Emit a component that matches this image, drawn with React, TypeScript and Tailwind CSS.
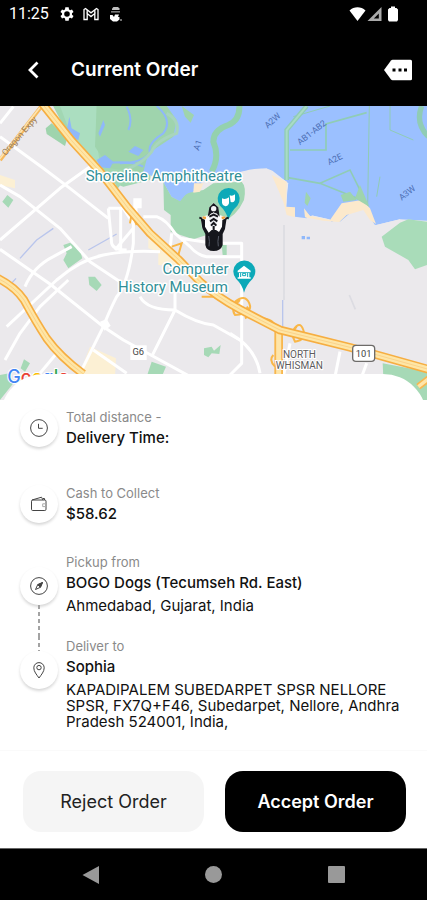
import type { ReactNode } from "react";

const sans = "font-['Inter','Liberation_Sans',sans-serif]";

function StatusBar() {
  return (
    <div className="flex h-8 items-center justify-between bg-black pr-[29px] pb-1 pl-[9px] text-white">
      <div className="flex items-center">
        <span className="w-[50px] font-['Roboto',sans-serif] text-base leading-5">11:25</span>
        <svg className="size-4" viewBox="0 0 24 24" fill="currentColor" aria-hidden="true">
          <path
            fillRule="evenodd"
            d="M19.4 13c.1-.3.1-.7.1-1s0-.7-.1-1l2.4-1.9-2.3-4-2.8 1.1a8 8 0 0 0-1.7-1L14.5 2h-5L9 5.2a8 8 0 0 0-1.7 1L4.500 5.1l-2.3 4L4.600 11a8 8 0 0 0 0 2l-2.400 1.900 2.300 4 2.800-1.100a8 8 0 0 0 1.700 1l.5 3.200h5l.5-3.200a8 8 0 0 0 1.700-1l2.800 1.100 2.300-4zM12 16.200a4.200 4.200 0 1 1 0-8.400 4.200 4.200 0 0 1 0 8.400z"
          />
        </svg>
        <svg className="ml-2 size-4" viewBox="0 0 16 16" fill="none" stroke="currentColor" strokeWidth="1.3" aria-hidden="true">
          <path d="M1 13.500V3.500L2.500 2.500 8 6.800l5.500-4.300L15 3.500v10h-3.200V7.600L8 10.600 4.200 7.600v5.900z" />
          <path d="M4.200 7.600V4M11.800 7.600V4" />
        </svg>
        <svg className="ml-2.5" width="13" height="16" viewBox="0 0 13 16" fill="currentColor" aria-hidden="true">
          <path d="M3 2.500 4.500 1H9l1.500 1.500V4H3z" opacity=".75" />
          <path d="M2 5.200h9v1.300H2z" opacity=".6" />
          <path d="M1 9h2.500l1.500 2 1-2.500h4L9 11h1.500v2.500L8 15.500H4L1 13z" />
          <circle cx="12" cy="14" r=".8" />
        </svg>
      </div>
      <div className="flex items-center">
        <svg width="17" height="16" viewBox="0 0 17 16" fill="currentColor" aria-hidden="true">
          <path d="M.5 4.500C5 .3 12 .3 16.500 4.500L8.500 15z" />
        </svg>
        <svg className="ml-px" width="15" height="16" viewBox="0 0 15 16" aria-hidden="true">
          <path d="M14.500 1v14H.5z" fill="#aaa" />
          <path d="M11.800 7.500v5H6.800z" fill="#000" />
        </svg>
        <svg className="ml-1.5" width="10" height="16" viewBox="0 0 10 16" fill="currentColor" aria-hidden="true">
          <path d="M3 .5h4v1.500h1.500L10 3.500V14l-1 1.500H1L0 14V3.500L1.500 2H3z" />
        </svg>
      </div>
    </div>
  );
}

function Header() {
  return (
    <header className="flex h-[74px] items-center bg-black pt-0.5 pr-[14px] pl-[26px] text-white">
      <button type="button" aria-label="Back" className="flex h-8 w-[45px] items-center">
        <svg width="14" height="18" viewBox="0 0 14 18" fill="none" stroke="currentColor" strokeWidth="2.8" aria-hidden="true">
          <path d="M11.500 1.500 4 9l7.500 7.500" />
        </svg>
      </button>
      <h1 className="flex-1 text-[19px] leading-6 font-semibold">Current Order</h1>
      <button type="button" aria-label="Messages">
        <svg width="30" height="22" viewBox="0 0 30 22" aria-hidden="true">
          <path d="M1 11 8 1.500Q8.600.7 9.600.7H27.500Q29 .7 29 2.200V20Q29 21.300 27.500 21.300H9.600Q8.600 21.300 8 20.500z" fill="#fff" />
          <path d="M9.500 9.500h3v3h-3zM15.500 9.500h3v3h-3zM21 9.500h3v3h-3z" fill="#000" />
        </svg>
      </button>
    </header>
  );
}

const highways = [
  "M118 0L215 122L300 215L385 325L450 400L535 478L600 545Q650 590 720 628Q790 665 840 690L1050 742L1300 812",
  "M-10 533Q45 560 72 600Q110 670 140 715Q180 770 250 822",
];

const streets = [
  "M0 110L130 205L210 265L325 355",
  "M40 20L0 70M0 255L60 290L180 385L270 485L360 545",
  "M0 448L150 552L310 680L370 720L480 780L580 835",
  "M0 420L180 265L270 200",
  "M20 680L170 540Q240 480 310 465T480 455",
  "M15 780L60 700L120 620L205 540",
  "M75 560Q100 500 160 470L215 440",
  "M325 325H370L400 370V430Q385 550 350 590Q325 640 310 680L240 820",
  "M325 325L335 430Q340 450 380 450M362 325V445",
  "M408 300V345M430 350H470Q500 360 525 400L570 440Q590 465 620 470H725V430H640L540 415",
  "M515 400L510 450M725 470V790L690 825",
  "M420 590Q440 630 525 630V560M525 630L455 770M525 630Q590 670 640 675L720 720Q770 760 780 820",
  "M345 450L400 385M170 760L120 820M280 750L380 820M720 720L690 700",
  "M870 730L850 830M1020 755L1005 830M1100 790L1085 830",
];

function DeliveryMap() {
  return (
    <svg
      className="block h-auto w-full"
      viewBox="0 18 1281 882"
      role="img"
      aria-label="Map of Mountain View with the courier's position"
    >
      <rect y="0" width="1281" height="900" fill="#ebe9ec" />

      <path d="M150 0L215 125L290 180L330 245L370 260L450 240L480 0z" fill="#a2d7b3" />
      <path d="M180 18H290V130L300 190L265 180L215 110z" fill="#abdec0" />
      <path d="M290 18H760V210L400 215L330 205L285 140z" fill="#9fd4ad" />
      <path d="M137 85L155 70L202 115L195 138L140 102z" fill="#9fd4ad" />
      <path
        d="M500 18H1281V362L1200 358L1125 376L1085 310L1020 365L930 345L860 330V245L800 205L725 215L610 245L580 275L540 302L515 290L490 245L430 215L445 160L520 110L530 60z"
        fill="#9bc0ff"
      />
      <path d="M290 180L315 165L340 185L330 205L300 202zM200 90L208 50L215 85L240 100L235 120L205 112zM385 155L405 138L430 150L415 168zM295 100L310 60L315 75L300 110z" fill="#8fb8fa" />
      <path d="M380 20Q400 60 385 90M470 18Q520 60 490 100Q440 130 450 160Q420 190 360 190M320 190Q390 180 430 200" fill="none" stroke="#8fb8fa" strokeWidth="6" />
      <path d="M500 40Q540 60 530 100Q470 120 455 155Q430 190 370 212" fill="none" stroke="#a8d5bd" strokeWidth="9" />
      <path d="M545 18L582 45L572 68L555 50z" fill="#9fd4ad" />
      <path d="M718 18Q720 60 685 75Q640 90 640 125Q660 170 635 215" fill="none" stroke="#94d1ae" strokeWidth="18" />
      <g fill="none" stroke="#90ccb5" strokeWidth="5">
        <path d="M860 232L960 250L1090 302M960 250L1050 210L1085 280M870 150H978V72L1100 38M978 72V150" />
        <path d="M1108 18L1103 320M1170 18V90L1240 120M1140 230L1130 290M880 50L990 18" strokeWidth="3" />
      </g>
      <path d="M920 18L860 90V240" fill="none" stroke="#90ccb5" strokeWidth="14" />
      <path d="M920 18L860 90V240" fill="none" stroke="#a9dbc5" strokeWidth="6" />
      <path d="M1265 18Q1245 70 1285 110" fill="none" stroke="#90ccb5" strokeWidth="16" />
      <path d="M725 215Q800 195 825 218L865 250L855 345H930L1020 365L1130 375L1200 358V450H740L640 400L580 280L610 245z" fill="#ebe9ec" />
      <path d="M865 252L860 322L885 322V350L920 355L915 320L930 350L945 340L960 350L972 335L995 365L1022 355L1028 300L985 270z" fill="#9bc0ff" />
      <path d="M815 225L860 245L858 320L885 322V352L860 345L850 305L835 270z" fill="#fce9cc" />
      <path d="M1025 310L1085 300L1110 325L1128 372L1110 360L1090 330L1040 345L1018 366L970 362L915 352L912 325L930 348L990 360z" fill="#fce9cc" />
      <path d="M918 275L932 295L922 318L914 308zM1022 285L1050 275L1070 300L1030 305zM1080 255L1108 320L1065 295z" fill="#9fd4ad" />
      <path d="M490 245L515 290L540 302L560 280L610 270L640 250L725 245Q740 260 732 300Q710 350 660 370L620 405L580 418L512 395V345L492 330z" fill="#a3d7b3" />
      <path d="M492 250H582V270L555 285L540 304L515 290z" fill="#9bc0ff" />
      <path d="M582 250H610L600 275L580 278z" fill="#fce9cc" />
      <path d="M1145 410L1200 368L1225 358L1281 365V495L1245 508L1225 480L1155 440z" fill="#a9dcb9" />
      <g fill="#a6d9b6">
        <path d="M190 435L210 428L240 450L247 475L205 505L190 480L200 460z" />
        <path d="M265 530H285L305 555L290 573L268 555z" />
        <path d="M22 285L40 300L25 323L7 305z" />
        <path d="M665 435H680V465H668z" />
        <path d="M612 745L635 740L642 752L662 735L658 762L635 760L625 772L612 765z" />
        <path d="M455 785L498 800L485 830H440z" />
        <path d="M72 778L90 790L75 815L62 805zM0 825L28 820L40 850L0 900z" />
        <path d="M1148 790L1281 815V900H1230L1150 830z" />
        <path d="M345 245L365 250L350 270z" />
      </g>
      <g fill="#fcf0d4">
        <path d="M270 740L348 775L345 830H235z" />
        <path d="M445 415L500 445L540 500L475 495V455L445 445z" />
        <path d="M0 225L45 240V265L0 255z" />
      </g>
      <path d="M60 475L110 420L160 385M265 450L350 402M30 555L48 535M848 600V680" fill="none" stroke="#b9c5ec" strokeWidth="4" />
      <path d="M852 375V600M1048 585L1066 628" fill="none" stroke="#dcdce2" strokeWidth="5" />
      <path d="M905 408h10v10h-10zM920 410h10v8h-10z" fill="#8fb8fa" />

      <g fill="none" stroke="#fff" strokeWidth="9" strokeLinejoin="round">
        {streets.map((d) => (
          <path key={d} d={d} />
        ))}
      </g>
      <path d="M400 295h25v30h-25zM300 665l20-8 12 20-18 15z" fill="#fff" />

      <g fill="none" stroke="#f9b748" strokeWidth="6">
        <path d="M390 370L395 340L410 375M515 440L545 430L535 465M605 590H640L660 600" />
        <path d="M705 605Q735 580 748 610T705 645Q690 625 720 600M740 620Q760 640 735 655" />
        <path d="M880 690Q900 660 910 690T885 725Q870 700 890 680" />
        <path d="M830 700Q830 660 790 655M820 765Q805 780 825 800" />
      </g>
      <path d="M125 18L0 180" fill="none" stroke="#f5b95e" strokeWidth="12" />
      <path d="M123 18L-2 178" fill="none" stroke="#fde5b1" strokeWidth="5" />
      <path d="M836 690V835" fill="none" stroke="#f8b74e" strokeWidth="26" />
      <path d="M836 690V835" fill="none" stroke="#fee5a9" strokeWidth="15" />
      <path d="M1255 860L1300 825" fill="none" stroke="#f8b74e" strokeWidth="20" />
      <path d="M1255 860L1300 825" fill="none" stroke="#fee5a9" strokeWidth="10" />
      <g fill="none" strokeLinejoin="round">
        {highways.map((d) => (
          <g key={d}>
            <path d={d} stroke="#f6ae42" strokeWidth="26" />
            <path d={d} stroke="#fee6a6" strokeWidth="16" />
            <path d={d} stroke="#fbd28a" strokeWidth="3" />
          </g>
        ))}
      </g>

      <g fontFamily="Roboto, sans-serif" fontSize="26" fill="#4d6fb5">
        <text transform="translate(596 153) rotate(-70)">A1</text>
        <text transform="translate(803 86) rotate(-42)">A2W</text>
        <text transform="translate(900 136) rotate(-38)">AB1-AB2</text>
        <text transform="translate(988 196) rotate(-27)">A2E</text>
        <text transform="translate(1205 302) rotate(-38)">A3W</text>
        <text transform="translate(17 168) rotate(-49)" fill="#9c7f5c">Oregon Expy</text>
      </g>

      <rect x="391" y="736" width="49" height="44" fill="#fff" />
      <text x="415" y="766" textAnchor="middle" fontFamily="Roboto, sans-serif" fontSize="28" fill="#444">
        G6
      </text>
      <rect x="1058" y="736" width="66" height="48" rx="10" fill="#fff" stroke="#6d6b69" strokeWidth="4" />
      <text x="1091" y="770" textAnchor="middle" fontFamily="Roboto, sans-serif" fontSize="28" fill="#444">
        101
      </text>
      <g
        fontFamily="Roboto, sans-serif"
        fontSize="30"
        fill="#5d5b5d"
        stroke="#fff"
        strokeWidth="6"
        paintOrder="stroke"
        textAnchor="middle"
      >
        <text x="898" y="773">NORTH</text>
        <text x="898" y="808">WHISMAN</text>
      </g>
      <g
        fontFamily="Roboto, sans-serif"
        fontSize="45"
        fill="#318f98"
        stroke="#fff"
        strokeWidth="9"
        strokeLinejoin="round"
        paintOrder="stroke"
      >
        <text x="257" y="242">Shoreline Amphitheatre</text>
        <text x="686" y="522" textAnchor="end">Computer</text>
        <text x="684" y="576" textAnchor="end">History Museum</text>
      </g>

      <path d="M685 360Q680 335 660 317A33 33 0 1 1 712 317Q692 335 685 360z" fill="#0ca9b8" />
      <path d="M666 295q10 5 21-3v18q-3 9-11 9-9-2-10-10zM689 286q9 4 16-3v17q-3 8-9 7l-4-1z" fill="#fff" />
      <path d="M732 578Q728 555 708 536A33 33 0 1 1 758 536Q738 555 732 578z" fill="#0ca9b8" />
      <path d="M713 512L732 497L752 512V517H713zM717 519H748V532H752V536H713V532H717z" fill="#fff" />
      <path d="M722 519V531M743 519V531M728 520H737V527H728z" stroke="#0ca9b8" strokeWidth="3" fill="none" />

      <g aria-hidden="true">
        <path d="M641 308L655 322L658 345L680 352L676 385L664 400V435Q660 453 641 453Q622 453 618 435V400L606 385L602 352L624 345L628 322z" fill="#fff" />
        <path d="M602 354L615 359L615 380L626 398L635 390H648L657 396L666 380L667 360L680 354L675 387L668 402V435Q662 453 641 453Q619 453 616 435V402L607 385z" fill="#15161c" />
        <path d="M628 322L641 309L655 322L659 350L649 340H634L623 350z" fill="#16181e" />
        <circle cx="641" cy="326" r="8" fill="#f3f4f6" />
        <path d="M627 350L641 336L655 350L650 376L641 392L632 376z" fill="#eceef2" />
        <path d="M628 350L641 344L654 350M630 364L641 357L652 364M633 377L641 369L649 377M641 378V392" fill="none" stroke="#15161c" strokeWidth="6" />
        <path d="M626 408Q630 425 627 439M656 408Q652 425 655 439" fill="none" stroke="#555a66" strokeWidth="3" />
        <path d="M598 353L607 356M676 356L686 353" stroke="#15161c" strokeWidth="6" />
        <path d="M608 352L618 354M665 354L675 352" stroke="#f0a343" strokeWidth="7" />
      </g>

      <g fontFamily="Inter, sans-serif" fontSize="54" fontWeight="500" stroke="#fff" strokeWidth="6" paintOrder="stroke">
        <text x="22" y="850">
          <tspan fill="#4285f4">G</tspan>
          <tspan fill="#ea4335">o</tspan>
          <tspan fill="#fbbc05">o</tspan>
          <tspan fill="#4285f4">g</tspan>
          <tspan fill="#34a853">l</tspan>
          <tspan fill="#ea4335">e</tspan>
        </text>
      </g>
    </svg>
  );
}

function Disc({ children }: { children: ReactNode }) {
  return (
    <div className="flex size-[38px] shrink-0 items-center justify-center rounded-full bg-white text-[#444] shadow-[0_2px_3px_rgba(0,0,0,0.16)]">
      <svg
        width="20"
        height="20"
        viewBox="0 0 20 20"
        fill="none"
        stroke="currentColor"
        strokeLinejoin="round"
        aria-hidden="true"
      >
        {children}
      </svg>
    </div>
  );
}

const dashes = "w-0.5 bg-[repeating-linear-gradient(to_bottom,#a3a3a3_0_4px,transparent_4px_7px)]";
const label = "text-[13px] leading-5 text-[#8a8a8a]";
const value = "text-[15px] leading-[22px] font-medium text-[#111]";

function OrderDetails() {
  return (
    <main className="relative -mt-[26px] flex-1 rounded-t-[44px] bg-white px-5 pt-[33px] pb-5">
      <section className="flex items-center gap-2">
        <Disc>
          <circle cx="10" cy="10" r="8.4" />
          <path d="M9.500 5.800v4.500h4.200" />
        </Disc>
        <div>
          <p className={label}>Total distance -</p>
          <p className={value}>Delivery Time:</p>
        </div>
      </section>

      <section className="mt-[34px] flex items-center gap-2">
        <Disc>
          <rect x="2.5" y="6" width="14.5" height="10.5" rx="1.2" />
          <path d="M3 6 12.500 3.200 14 6M14 4.500h1.500V6" />
          <path d="M17 9.800h-3.300v2.800H17" stroke="#aaa" />
        </Disc>
        <div>
          <p className={label}>Cash to Collect</p>
          <p className={value}>$58.62</p>
        </div>
      </section>

      <section className="mt-[27px] flex gap-2">
        <div className="flex flex-col items-center pt-[15px]">
          <Disc>
            <circle cx="10" cy="10" r="8.4" />
            <path d="M13.500 6.500 11.400 11.300 6.500 13.500 8.700 8.700z" />
            <path d="M13.500 6.500 11.400 11.300 8.700 8.700z" fill="currentColor" />
          </Disc>
          <div className={`flex-1 ${dashes}`} />
        </div>
        <div className="pb-[18px]">
          <p className={label}>Pickup from</p>
          <p className={value}>BOGO Dogs (Tecumseh Rd. East)</p>
          <p className="text-[15px] leading-6 text-[#111]">Ahmedabad, Gujarat, India</p>
        </div>
      </section>

      <section className="flex gap-2">
        <div className="flex flex-col items-center">
          <div className={`h-[15px] ${dashes}`} />
          <Disc>
            <path d="M10 18C7.500 14.500 4.800 11.500 4.800 7.800a5.200 5.200 0 0 1 10.400 0C15.200 11.500 12.500 14.500 10 18z" />
            <circle cx="10" cy="7.6" r="2.2" />
          </Disc>
        </div>
        <div>
          <p className={label}>Deliver to</p>
          <p className={value}>Sophia</p>
          <p className="mt-1 text-[15px] leading-4 text-[#111]">
            KAPADIPALEM SUBEDARPET SPSR NELLORE SPSR, FX7Q+F46, Subedarpet, Nellore, Andhra Pradesh 524001, India,
          </p>
        </div>
      </section>
    </main>
  );
}

function Actions() {
  const base = "h-[61px] flex-1 rounded-[18px] leading-6";
  return (
    <footer className="flex gap-[21px] border-t border-[#fafafa] bg-white pt-5 pr-[21px] pb-4 pl-[23px]">
      <button type="button" className={`${base} bg-[#f5f5f5] text-lg text-[#222]`}>
        Reject Order
      </button>
      <button type="button" className={`${base} bg-black text-lg font-semibold text-white`}>
        Accept Order
      </button>
    </footer>
  );
}

function NavigationBar() {
  const key = "flex items-center justify-center";
  return (
    <nav aria-label="System" className="grid h-[52px] grid-cols-3 border-t border-[#666] bg-black px-[29px] text-[#999]">
      <button type="button" aria-label="Back" className={key}>
        <svg width="18" height="20" viewBox="0 0 18 20" fill="currentColor">
          <path d="M17 1v18L.5 10z" />
        </svg>
      </button>
      <button type="button" aria-label="Home" className={key}>
        <span className="size-[17px] rounded-full bg-current" />
      </button>
      <button type="button" aria-label="Recent apps" className={key}>
        <span className="size-[17px] rounded-[1px] bg-current" />
      </button>
    </nav>
  );
}

export default function App() {
  return (
    <div className={`flex min-h-screen flex-col bg-white ${sans}`}>
      <StatusBar />
      <Header />
      <DeliveryMap />
      <OrderDetails />
      <Actions />
      <NavigationBar />
    </div>
  );
}
